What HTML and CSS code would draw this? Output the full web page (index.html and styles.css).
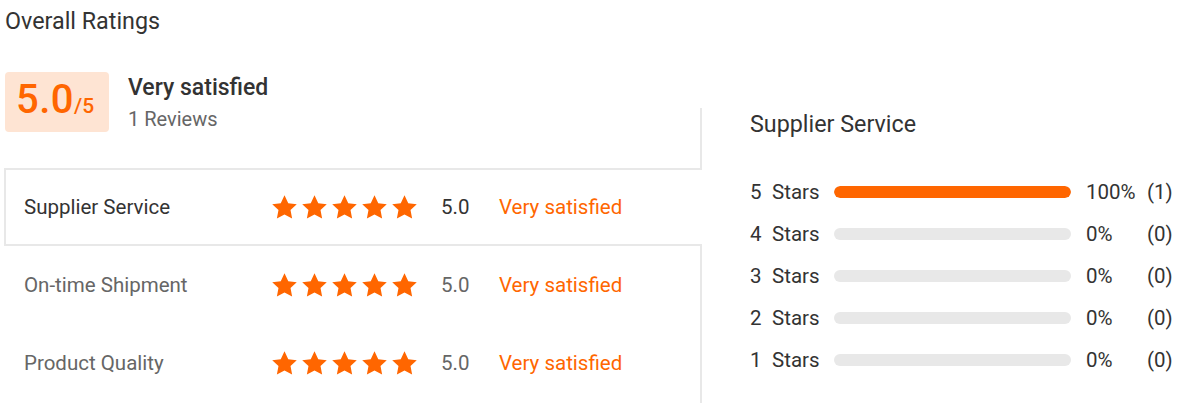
FILE: index.html
```html
<!DOCTYPE html>
<html lang="en">
<head>
<meta charset="utf-8">
<title>Overall Ratings</title>
<link rel="stylesheet" href="styles.css">
</head>
<body>
<div class="page">
  <div class="title">Overall Ratings</div>
  <div class="main">
    <div class="left">
      <div class="summary">
        <div class="score-box"><span class="score">5.0</span><span class="of">/5</span></div>
        <div class="summary-text">
          <div class="verdict">Very satisfied</div>
          <div class="reviews">1 Reviews</div>
        </div>
      </div>
      <div class="list">
        <div class="row active">
          <div class="label">Supplier Service</div>
          <div class="stars">
            <svg class="star" viewBox="1 1 22 21"><path d="M12 1.2l3.3 6.9 7.5.9-5.5 5.2 1.4 7.5L12 18l-6.7 3.7 1.4-7.5L1.2 9l7.5-.9z"/></svg>
            <svg class="star" viewBox="1 1 22 21"><path d="M12 1.2l3.3 6.9 7.5.9-5.5 5.2 1.4 7.5L12 18l-6.7 3.7 1.4-7.5L1.2 9l7.5-.9z"/></svg>
            <svg class="star" viewBox="1 1 22 21"><path d="M12 1.2l3.3 6.9 7.5.9-5.5 5.2 1.4 7.5L12 18l-6.7 3.7 1.4-7.5L1.2 9l7.5-.9z"/></svg>
            <svg class="star" viewBox="1 1 22 21"><path d="M12 1.2l3.3 6.9 7.5.9-5.5 5.2 1.4 7.5L12 18l-6.7 3.7 1.4-7.5L1.2 9l7.5-.9z"/></svg>
            <svg class="star" viewBox="1 1 22 21"><path d="M12 1.2l3.3 6.9 7.5.9-5.5 5.2 1.4 7.5L12 18l-6.7 3.7 1.4-7.5L1.2 9l7.5-.9z"/></svg>
          </div>
          <div class="value">5.0</div>
          <div class="level">Very satisfied</div>
        </div>
        <div class="row">
          <div class="label">On-time Shipment</div>
          <div class="stars">
            <svg class="star" viewBox="1 1 22 21"><path d="M12 1.2l3.3 6.9 7.5.9-5.5 5.2 1.4 7.5L12 18l-6.7 3.7 1.4-7.5L1.2 9l7.5-.9z"/></svg>
            <svg class="star" viewBox="1 1 22 21"><path d="M12 1.2l3.3 6.9 7.5.9-5.5 5.2 1.4 7.5L12 18l-6.7 3.7 1.4-7.5L1.2 9l7.5-.9z"/></svg>
            <svg class="star" viewBox="1 1 22 21"><path d="M12 1.2l3.3 6.9 7.5.9-5.5 5.2 1.4 7.5L12 18l-6.7 3.7 1.4-7.5L1.2 9l7.5-.9z"/></svg>
            <svg class="star" viewBox="1 1 22 21"><path d="M12 1.2l3.3 6.9 7.5.9-5.5 5.2 1.4 7.5L12 18l-6.7 3.7 1.4-7.5L1.2 9l7.5-.9z"/></svg>
            <svg class="star" viewBox="1 1 22 21"><path d="M12 1.2l3.3 6.9 7.5.9-5.5 5.2 1.4 7.5L12 18l-6.7 3.7 1.4-7.5L1.2 9l7.5-.9z"/></svg>
          </div>
          <div class="value">5.0</div>
          <div class="level">Very satisfied</div>
        </div>
        <div class="row">
          <div class="label">Product Quality</div>
          <div class="stars">
            <svg class="star" viewBox="1 1 22 21"><path d="M12 1.2l3.3 6.9 7.5.9-5.5 5.2 1.4 7.5L12 18l-6.7 3.7 1.4-7.5L1.2 9l7.5-.9z"/></svg>
            <svg class="star" viewBox="1 1 22 21"><path d="M12 1.2l3.3 6.9 7.5.9-5.5 5.2 1.4 7.5L12 18l-6.7 3.7 1.4-7.5L1.2 9l7.5-.9z"/></svg>
            <svg class="star" viewBox="1 1 22 21"><path d="M12 1.2l3.3 6.9 7.5.9-5.5 5.2 1.4 7.5L12 18l-6.7 3.7 1.4-7.5L1.2 9l7.5-.9z"/></svg>
            <svg class="star" viewBox="1 1 22 21"><path d="M12 1.2l3.3 6.9 7.5.9-5.5 5.2 1.4 7.5L12 18l-6.7 3.7 1.4-7.5L1.2 9l7.5-.9z"/></svg>
            <svg class="star" viewBox="1 1 22 21"><path d="M12 1.2l3.3 6.9 7.5.9-5.5 5.2 1.4 7.5L12 18l-6.7 3.7 1.4-7.5L1.2 9l7.5-.9z"/></svg>
          </div>
          <div class="value">5.0</div>
          <div class="level">Very satisfied</div>
        </div>
      </div>
    </div>
    <div class="right">
      <div class="right-title">Supplier Service</div>
      <div class="dist">
        <div class="dist-row">
          <span class="num">5</span><span class="stars-word">Stars</span>
          <div class="bar"><div class="fill" style="width:100%"></div></div>
          <span class="pct">100%</span><span class="count">(1)</span>
        </div>
        <div class="dist-row">
          <span class="num">4</span><span class="stars-word">Stars</span>
          <div class="bar"><div class="fill" style="width:0%"></div></div>
          <span class="pct">0%</span><span class="count">(0)</span>
        </div>
        <div class="dist-row">
          <span class="num">3</span><span class="stars-word">Stars</span>
          <div class="bar"><div class="fill" style="width:0%"></div></div>
          <span class="pct">0%</span><span class="count">(0)</span>
        </div>
        <div class="dist-row">
          <span class="num">2</span><span class="stars-word">Stars</span>
          <div class="bar"><div class="fill" style="width:0%"></div></div>
          <span class="pct">0%</span><span class="count">(0)</span>
        </div>
        <div class="dist-row">
          <span class="num">1</span><span class="stars-word">Stars</span>
          <div class="bar"><div class="fill" style="width:0%"></div></div>
          <span class="pct">0%</span><span class="count">(0)</span>
        </div>
      </div>
    </div>
  </div>
</div>
</body>
</html>
```

FILE: styles.css
```css
* { box-sizing: border-box; }

html, body {
  margin: 0;
  padding: 0;
  background: #fff;
}

body {
  font-family: Roboto, "Noto Sans", Arial, sans-serif;
  color: #333;
  width: 1184px;
  height: 403px;
  overflow: hidden;
}

.page {
  padding-top: 7px;
}

.title {
  padding-left: 5px;
  font-size: 23.3px;
  line-height: 28px;
  color: #333;
}

.main {
  display: flex;
  margin-top: 37px;
  height: 331px;
}

.left {
  width: 700px;
  flex: none;
}

.summary {
  display: flex;
  padding-left: 5px;
  height: 60px;
}

.score-box {
  display: flex;
  align-items: baseline;
  height: 60px;
  width: 104px;
  padding-left: 12px;
  background: #fee4d3;
  border-radius: 4px;
  color: #ff6600;
  line-height: 56px;
}

.score {
  font-size: 40px;
  font-weight: 500;
  letter-spacing: 0.5px;
  margin-left: -1px;
}

.of {
  font-size: 21px;
  font-weight: 500;
  margin-left: 0;
}

.summary-text {
  margin-left: 19px;
}

.verdict {
  margin-top: 2px;
  font-size: 23px;
  font-weight: 500;
  line-height: 28px;
  color: #333;
}

.reviews {
  margin-top: 4px;
  font-size: 20px;
  line-height: 26px;
  color: #666;
}

.list {
  margin-top: 36px;
}

.row {
  display: flex;
  align-items: center;
  height: 78px;
  margin-left: 4px;
  margin-right: -2px;
  padding-left: 18px;
  border: 2px solid transparent;
  border-right: none;
  font-size: 20.5px;
  color: #666;
}

.row.active {
  position: relative;
  z-index: 1;
  background: #fff;
  border-color: #e8e8e8;
  color: #333;
}

.label {
  width: 248px;
  flex: none;
}

.stars {
  display: flex;
  gap: 5px;
  width: 145px;
  flex: none;
  margin-right: 24px;
}

.star {
  width: 25px;
  height: 24px;
  fill: #ff6600;
  display: block;
}

.value {
  width: 58px;
  flex: none;
}

.level {
  color: #ff6600;
}

.right {
  flex: 1;
  margin-top: 36px;
  border-left: 2px solid #e8e8e8;
  padding-left: 48px;
}

.right-title {
  font-size: 23.3px;
  line-height: 32px;
  color: #333;
}

.dist {
  margin-top: 31px;
}

.dist-row {
  display: flex;
  align-items: center;
  height: 42px;
  font-size: 20.5px;
  color: #333;
}

.num {
  width: 22px;
  flex: none;
}

.stars-word {
  width: 62px;
  flex: none;
}

.bar {
  width: 237px;
  height: 12px;
  border-radius: 6px;
  background: #e8e8e8;
  overflow: hidden;
  flex: none;
}

.fill {
  height: 100%;
  background: #ff6600;
  border-radius: 6px;
}

.pct {
  margin-left: 15px;
  width: 61px;
  flex: none;
}

.count {
  flex: none;
}
```
